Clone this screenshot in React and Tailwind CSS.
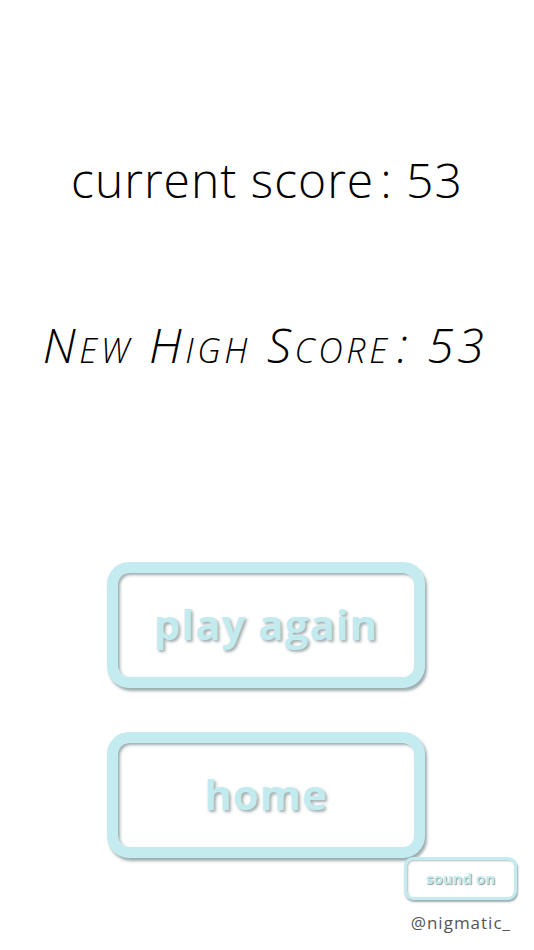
import React from "react";

const Button = ({ label }) => (
  <button className="w-[318px] h-[126px] rounded-[22px] border-[11px] border-[#c4ecf0] bg-white flex items-center justify-center shadow-[2px_3px_3px_rgba(60,90,95,0.5),inset_2px_2px_3px_rgba(60,90,95,0.5)]">
    <span className="text-[42px] font-bold text-[#c2ebf0] tracking-[1px] [text-shadow:2px_2px_3px_rgba(70,90,95,0.5)] -mt-1">
      {label}
    </span>
  </button>
);

const App = () => {
  return (
    <div className="w-[534px] h-[950px] bg-white flex flex-col items-center overflow-hidden font-['Open_Sans',sans-serif]">
      <div className="mt-[150px] h-[60px] flex items-center text-[48px] font-light tracking-[1px] text-black leading-none">
        current score<span className="ml-[6px]">:</span>&nbsp;53
      </div>
      <div className="mt-[105px] ml-[-4px] h-[60px] flex items-center text-[48px] font-light italic tracking-[3.6px] text-black leading-none [font-variant:small-caps]">
        New High Score<span className="ml-[6px]">:</span>&nbsp;53
      </div>
      <div className="mt-[187px] mr-[2px] flex flex-col items-center gap-[44px]">
        <Button label="play again" />
        <Button label="home" />
      </div>
      <div className="w-full flex flex-col items-end pr-[17px] -mt-[1px]">
        <button className="w-[113px] h-[43px] rounded-[9px] border-[3px] border-[#c4ecf0] bg-white flex items-center justify-center shadow-[1px_2px_2px_rgba(60,90,95,0.5),inset_1px_1px_2px_rgba(60,90,95,0.4)]">
          <span className="text-[15px] font-bold text-[#c2ebf0] [text-shadow:1px_1px_1px_rgba(70,90,95,0.6)]">
            sound on
          </span>
        </button>
        <div className="mt-[10px] mr-[6px] text-[17px] text-[#555] tracking-[1px]">
          @nigmatic_
        </div>
      </div>
    </div>
  );
};

export default App;
